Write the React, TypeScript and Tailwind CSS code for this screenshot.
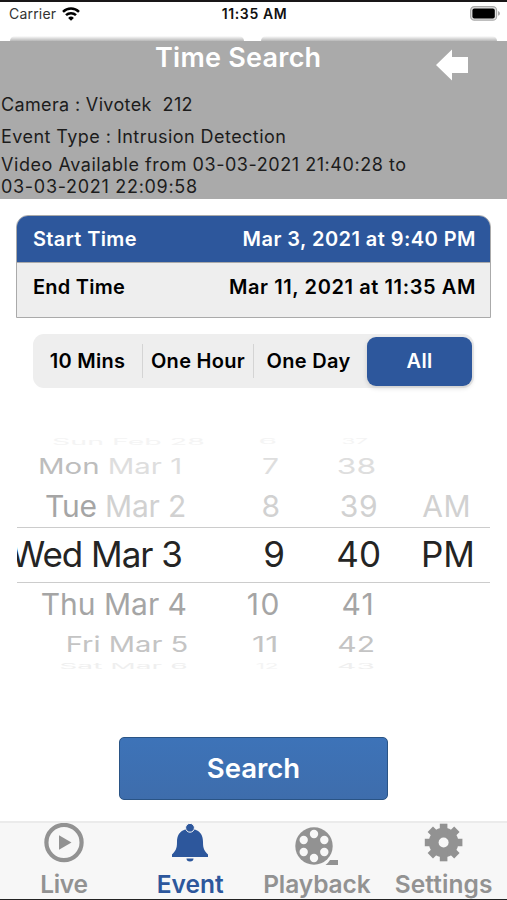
const ranges = ['10 Mins', 'One Hour', 'One Day', 'All']

function StatusBar() {
  return (
    <div className="relative h-[41px] border-t-2 border-[#191718] bg-white">
      <div className="grid h-[23px] grid-cols-3 items-center pl-[9px] pr-[7px]">
        <div className="flex items-center gap-[6px]">
          <span className="text-[14px] tracking-[0.2px] text-[#333]">Carrier</span>
          <svg width="18" height="14" viewBox="0 0 18 14" fill="none" stroke="#000" strokeWidth="2.5">
            <path d="M1 4.8 A11.5 11.5 0 0 1 17 4.8" />
            <path d="M4 8.2 A7.2 7.2 0 0 1 14 8.2" />
            <path d="M9 13.8 L6.1 10.9 A4.2 4.2 0 0 1 11.9 10.9 Z" fill="#000" stroke="none" />
          </svg>
        </div>
        <span className="text-center text-[14px] font-semibold tracking-[0.6px] text-[#111] whitespace-nowrap">11:35 AM</span>
        <svg className="justify-self-end" width="30" height="15" viewBox="0 0 30 15">
          <rect x="0.6" y="0.6" width="26" height="13.6" rx="3.8" fill="#e2e2e2" stroke="#aaa" strokeWidth="1.2" />
          <rect x="2.4" y="2.4" width="22.4" height="10" rx="2" fill="#000" />
          <path d="M28 5 Q30 5.6 30 7.4 Q30 9.2 28 9.8 Z" fill="#aaa" />
        </svg>
      </div>
      <div className="absolute bottom-0 left-[10px] h-[5px] w-[234px] rounded-t-[8px] bg-linear-to-b from-white to-[#b8b8b8]" />
      <div className="absolute bottom-0 left-[261px] h-[5px] w-[236px] rounded-t-[8px] bg-linear-to-b from-white to-[#b8b8b8]" />
    </div>
  )
}

function Header() {
  return (
    <header className="h-[158px] bg-[#aaa] text-[18px] text-[#1c1c1c]">
      <div className="flex h-[49px] justify-between pl-[155px] pr-[39px]">
        <h1 className="text-[27px] font-semibold leading-[33px] tracking-[0.25px] text-white">Time Search</h1>
        <svg className="mt-[8px]" width="32" height="32" viewBox="0 0 32 32" fill="#fff">
          <path d="M0 16 L16 0.5 V8 H32 V24 H16 V31.5 Z" />
        </svg>
      </div>
      <div className="pl-px">
        <p className="h-[30px] whitespace-pre leading-[30px] tracking-[0.35px]">Camera : Vivotek  212</p>
        <p className="h-[34px] leading-[33px] tracking-[0.45px]">Event Type : Intrusion Detection</p>
        <p className="leading-[22px] tracking-[0.55px]">
          Video Available from 03-03-2021 21:40:28 to
          <br />
          <span className="tracking-[0.7px]">03-03-2021 22:09:58</span>
        </p>
      </div>
    </header>
  )
}

function TimeRange() {
  return (
    <div className="mx-4 mt-4 h-[103px] overflow-hidden rounded-t-[12px] border border-[#aaa] bg-[#eee] text-[20px] font-semibold">
      <div className="flex h-[47px] items-center justify-between border-b border-[#aaa] bg-[#2d579c] pl-4 pr-[14px] text-white">
        <span className="tracking-[0.35px]">Start Time</span>
        <span className="tracking-[0.45px]">Mar 3, 2021 at 9:40 PM</span>
      </div>
      <div className="flex h-[47px] items-center justify-between pl-4 pr-[14px] text-black">
        <span className="tracking-[0.25px]">End Time</span>
        <span className="tracking-[0.6px]">Mar 11, 2021 at 11:35 AM</span>
      </div>
    </div>
  )
}

function RangeTabs() {
  return (
    <div className="ml-[33px] mr-[33px] mt-4 flex h-[54px] items-center rounded-[11px] bg-[#eee] pr-[2px] text-[20px] font-semibold tracking-[0.3px]">
      <button className="w-[109px]">{ranges[0]}</button>
      <span className="h-[34px] w-px bg-[#d4d4d4]" />
      <button className="w-[110px] whitespace-nowrap">{ranges[1]}</button>
      <span className="h-[34px] w-px bg-[#d4d4d4]" />
      <button className="w-[109px] whitespace-nowrap">{ranges[2]}</button>
      <button className="ml-[4px] h-[49px] w-[105px] rounded-[9px] bg-[#2d579c] text-white shadow-[0_2px_5px_rgba(0,0,0,0.15)]">{ranges[3]}</button>
    </div>
  )
}

function Wheel() {
  return (
    <div className="mx-[17px] mt-[46px] flex h-[236px] flex-col overflow-hidden text-[30px] whitespace-nowrap">
      <div className="flex h-[15px] items-center leading-[15px] text-[#f4f4f4]">
        <span className="flex w-[188px] justify-end"><span className="origin-right scale-x-[0.95] scale-y-[0.3]">Sun Feb 28</span></span>
        <span className="flex w-[72px] justify-end"><span className="scale-y-[0.25]">6</span></span>
        <span className="flex w-[96px] justify-end"><span className="scale-x-75 scale-y-[0.25]">37</span></span>
      </div>
      <div className="flex h-[34px] items-center text-[#dedede]">
        <span className="flex w-[165px] justify-end"><span className="origin-right scale-x-[0.98] scale-y-[0.72]"><span className="text-[#bdbdbd]">Mon</span> Mar 1</span></span>
        <span className="flex w-[97px] justify-end"><span className="origin-right scale-y-[0.72]">7</span></span>
        <span className="flex w-[97px] justify-end"><span className="origin-right scale-x-[1.06] scale-y-[0.72]">38</span></span>
      </div>
      <div className="flex h-[44px] items-center pt-0.5 text-[#d1d1d1]">
        <span className="w-[169px] text-right tracking-[-0.2px]"><span className="text-[#a5a5a5]">Tue</span> Mar 2</span>
        <span className="w-[94px] text-right">8</span>
        <span className="w-[98px] text-right tracking-[0.5px]">39</span>
        <span className="w-[93px] text-right tracking-[0.5px]">AM</span>
      </div>
      <div className="flex h-[56px] shrink-0 items-center border-y border-[#ccc] pb-px text-[35px] text-[#242424]">
        <span className="flex w-[165px] shrink-0 justify-end"><span className="tracking-[-1px]">Wed Mar 3</span></span>
        <span className="w-[103px] text-right">9</span>
        <span className="w-[96px] text-right">40</span>
        <span className="w-[94px] text-right">PM</span>
      </div>
      <div className="flex h-[44px] items-center pb-px text-[#a5a5a5]">
        <span className="w-[170px] text-right">Thu Mar 4</span>
        <span className="w-[94px] text-right tracking-[1.5px]">10</span>
        <span className="w-[94px] text-right tracking-[1.2px]">41</span>
      </div>
      <div className="flex h-[35px] items-center text-[#c4c4c4]">
        <span className="flex w-[171px] justify-end"><span className="origin-right scale-x-[0.97] scale-y-[0.72]">Fri Mar 5</span></span>
        <span className="flex w-[90px] justify-end"><span className="origin-right scale-x-[1.08] scale-y-[0.72]">11</span></span>
        <span className="flex w-[97px] justify-end"><span className="origin-right scale-y-[0.72]">42</span></span>
      </div>
      <div className="flex h-[8px] shrink-0 items-center leading-[8px] text-[#efefef]">
        <span className="flex w-[171px] justify-end"><span className="origin-right scale-x-[0.94] scale-y-[0.25]">Sat Mar 6</span></span>
        <span className="flex w-[90px] justify-end text-[#f4f4f4]"><span className="origin-right scale-x-75 scale-y-[0.25]">12</span></span>
        <span className="flex w-[97px] justify-end"><span className="scale-y-[0.25]">43</span></span>
      </div>
    </div>
  )
}

function TabBar() {
  return (
    <nav className="mt-auto grid h-[79px] grid-cols-4 border-t-2 border-b border-t-[#ebebeb] border-b-[#222] bg-[#f7f7f7] text-[24.5px] font-semibold leading-[28px] text-[#929292]">
      <div className="flex flex-col items-center pl-px">
        <svg width="42" height="47" viewBox="0 0 42 47">
          <circle cx="21" cy="19.5" r="17.6" fill="none" stroke="#929292" strokeWidth="4.2" />
          <path d="M16 12.3 L28.5 19.5 L16 26.7 Z" fill="#929292" />
        </svg>
        <span className="tracking-[-0.3px]">Live</span>
      </div>
      <div className="flex flex-col items-center text-[#2d579c]">
        <svg width="42" height="47" viewBox="0 0 42 47" fill="#2d579c">
          <path d="M17.5 6 C10 8 8 13 8 19 C8 26 6.5 28 3 31.5 V34 H39 V31.5 C35.5 28 34 26 34 19 C34 13 32 8 24.5 6 Z" />
          <circle cx="21" cy="4.8" r="4.4" stroke="#f7f7f7" strokeWidth="1" />
          <path d="M17.5 35.5 H24.5 Q24.5 38.5 21 38.5 Q17.5 38.5 17.5 35.5 Z" />
        </svg>
        <span>Event</span>
      </div>
      <div className="flex flex-col items-center">
        <svg width="48" height="47" viewBox="0 0 48 47">
          <circle cx="21" cy="23" r="18.7" fill="#929292" />
          <g fill="#f7f7f7">
            <circle cx="21" cy="11" r="4.2" />
            <circle cx="31.3" cy="17" r="4.2" />
            <circle cx="31.3" cy="29" r="4.2" />
            <circle cx="21" cy="35" r="4.2" />
            <circle cx="10.7" cy="29" r="4.2" />
            <circle cx="10.7" cy="17" r="4.2" />
          </g>
          <path d="M32.5 42 Q34.5 41 37 37 H45 V42 Z" fill="#929292" />
        </svg>
        <span className="tracking-[-0.1px]">Playback</span>
      </div>
      <div className="flex flex-col items-center">
        <svg width="42" height="47" viewBox="0 0 42 47">
          <g transform="translate(20.6 19.5)" fill="#929292">
            <circle r="14.8" />
            <path id="tooth" d="M-3.8 -18.8 H3.8 V18.8 H-3.8 Z" />
            <use href="#tooth" transform="rotate(45)" />
            <use href="#tooth" transform="rotate(90)" />
            <use href="#tooth" transform="rotate(135)" />
            <circle r="5" fill="#f7f7f7" />
          </g>
        </svg>
        <span className="tracking-[0.1px]">Settings</span>
      </div>
    </nav>
  )
}

export default function App() {
  return (
    <div className="flex h-[900px] w-[507px] flex-col overflow-hidden bg-white font-[Inter,sans-serif]">
      <StatusBar />
      <Header />
      <TimeRange />
      <RangeTabs />
      <Wheel />
      <button className="mx-auto mt-[67px] h-[63px] w-[269px] rounded-[5px] border border-[#2a5485] bg-linear-to-b from-[#3d73b8] to-[#3e6dac] text-[27.5px] font-semibold text-white">
        Search
      </button>
      <TabBar />
    </div>
  )
}
